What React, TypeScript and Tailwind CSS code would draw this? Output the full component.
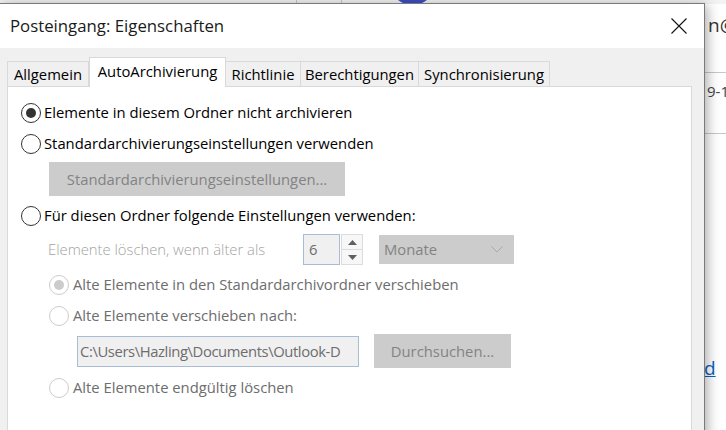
import React from "react";

const tabs = [
  { label: "Allgemein", w: "w-[82px]" },
  { label: "AutoArchivierung", w: "w-[137px]", active: true },
  { label: "Richtlinie", w: "w-[76px]" },
  { label: "Berechtigungen", w: "w-[119px]" },
  { label: "Synchronisierung", w: "w-[132px]" },
];

const Radio = ({ checked = false, disabled = false }: { checked?: boolean; disabled?: boolean }) => (
  <span
    className={
      "flex h-[20px] w-[20px] shrink-0 items-center justify-center rounded-full border bg-white " +
      (disabled ? "border-[#cccccc]" : "border-[#333333]")
    }
  >
    {checked && (
      <span className={"h-[10px] w-[10px] rounded-full " + (disabled ? "bg-[#cccccc]" : "bg-[#333333]")} />
    )}
  </span>
);

export default function App() {
  return (
    <div
      className="relative h-[430px] w-[726px] overflow-hidden bg-white text-[14.8px] text-black"
      style={{ fontFamily: '"Open Sans", "Noto Sans", sans-serif' }}
    >
      {/* outlook window behind the dialog */}
      <div className="absolute inset-x-0 top-0 h-[4px] bg-[#f3f3f3]">
        <div className="absolute left-[296px] top-0 h-full w-px bg-[#c8c8c8]" />
        <div className="absolute left-[341px] top-0 h-full w-px bg-[#c8c8c8]" />
        <div className="absolute left-[389px] top-[-42px] h-[47px] w-[47px] rounded-full bg-[#3d4fc6]" />
      </div>
      <div className="absolute left-[708px] top-[16px] whitespace-nowrap text-[19px] leading-none text-[#333]">n@</div>
      <div className="absolute left-[705px] top-[72px] h-px w-[30px] bg-[#c8c8c8]" />
      <div className="absolute left-[707px] top-[80px] whitespace-nowrap text-[15px] text-[#444]">9-1</div>
      <div className="absolute left-[705px] top-[133px] h-px w-[30px] bg-[#c8c8c8]" />
      <div className="absolute left-[704px] top-[354px] text-[19px] text-[#0563c1] underline">d</div>

      {/* dialog */}
      <div className="absolute left-[-1px] top-[3px] flex h-[450px] w-[706px] flex-col border border-[#7a7a7a] bg-[#f0f0f0] shadow-[2px_2px_12px_rgba(0,0,0,0.35)]">
        <div className="flex h-[44px] shrink-0 items-center justify-between bg-white pl-[10px] pr-[16px]">
          <span className="text-[16.8px] text-[#1a1a1a]">Posteingang: Eigenschaften</span>
          <svg width="16" height="16" viewBox="0 0 16 16" className="mr-[1px]">
            <path d="M0.5 0.5 L15.5 15.5 M15.5 0.5 L0.5 15.5" stroke="#111" strokeWidth="1.1" fill="none" />
          </svg>
        </div>

        <div className="flex flex-1 flex-col pl-[7px] pr-[12px] pt-[9px]">
          <div className="flex h-[29px] items-end">
            {tabs.map((t) =>
              t.active ? (
                <div
                  key={t.label}
                  className={`relative z-10 mb-[-1px] flex h-[30px] items-center justify-center border border-b-0 border-[#d9d9d9] bg-white pb-[3px] ${t.w}`}
                >
                  {t.label}
                </div>
              ) : (
                <div
                  key={t.label}
                  className={`flex h-[25px] items-center justify-center border border-b-0 border-[#d9d9d9] bg-[#f0f0f0] pt-[1px] ${t.w} -ml-px first:ml-0`}
                >
                  {t.label}
                </div>
              )
            )}
          </div>

          <div className="flex flex-1 flex-col border border-[#d9d9d9] bg-white pt-[10px]">
            <label className="ml-[13px] flex h-[31px] items-center gap-[3px]">
              <Radio checked />
              <span>Elemente in diesem Ordner nicht archivieren</span>
            </label>
            <label className="ml-[13px] flex h-[31px] items-center gap-[3px]">
              <Radio />
              <span>Standardarchivierungseinstellungen verwenden</span>
            </label>
            <div className="ml-[41px] mt-[3px] flex h-[34px] w-[296px] items-center justify-center bg-[#cccccc] text-[#838383]">
              Standardarchivierungseinstellungen...
            </div>
            <label className="ml-[13px] mt-[4px] flex h-[31px] items-center gap-[3px]">
              <Radio />
              <span>Für diesen Ordner folgende Einstellungen verwenden:</span>
            </label>

            <div className="mt-[3px] flex h-[31px] items-center">
              <span className="ml-[40px] w-[255px] whitespace-nowrap font-light text-[#a3a3a3]">Elemente löschen, wenn älter als</span>
              <div className="flex h-[31px] w-[37px] items-center border border-[#a8bcd6] bg-[#f0f0f0] pl-[5px] text-[#6d6d6d]">
                6
              </div>
              <div className="ml-[1px] flex h-[31px] w-[22px] flex-col">
                <div className="flex flex-1 items-center justify-center border border-[#dcdcdc] bg-[#f7f7f7]">
                  <svg width="9" height="5" viewBox="0 0 9 5">
                    <path d="M0 5 L4.5 0 L9 5 Z" fill="#606060" />
                  </svg>
                </div>
                <div className="flex flex-1 items-center justify-center border border-t-0 border-[#dcdcdc] bg-[#f7f7f7]">
                  <svg width="9" height="5" viewBox="0 0 9 5">
                    <path d="M0 0 L4.5 5 L9 0 Z" fill="#606060" />
                  </svg>
                </div>
              </div>
              <div className="ml-[16px] flex h-[29px] w-[135px] items-center justify-between bg-[#cccccc] pl-[5px] pr-[11px] text-[#838383]">
                <span>Monate</span>
                <svg width="12" height="7" viewBox="0 0 12 7">
                  <path d="M0.5 0.5 L6 6 L11.5 0.5" stroke="#a8a8a8" fill="none" />
                </svg>
              </div>
            </div>

            <label className="ml-[41px] mt-[4px] flex h-[31px] items-center gap-[4px] text-[#6d6d6d]">
              <Radio checked disabled />
              <span>Alte Elemente in den Standardarchivordner verschieben</span>
            </label>
            <label className="ml-[41px] flex h-[31px] items-center gap-[4px] text-[#6d6d6d]">
              <Radio disabled />
              <span>Alte Elemente verschieben nach:</span>
            </label>
            <div className="mt-[3px] flex h-[34px] items-center">
              <div className="ml-[69px] flex h-[31px] w-[282px] shrink-0 items-center overflow-hidden whitespace-nowrap border border-[#a8bcd6] bg-[#f0f0f0] pl-[2px] text-[#6d6d6d]">
                <span className="tracking-[-0.4px]">C:\Users\Hazling\Documents\Outlook-D</span>
              </div>
              <div className="ml-[15px] flex h-[34px] w-[137px] shrink-0 items-center justify-center bg-[#cccccc] text-[#838383]">
                Durchsuchen...
              </div>
            </div>
            <label className="ml-[41px] mt-[4px] flex h-[31px] items-center gap-[4px] text-[#6d6d6d]">
              <Radio disabled />
              <span>Alte Elemente endgültig löschen</span>
            </label>
          </div>
        </div>
      </div>
    </div>
  );
}
